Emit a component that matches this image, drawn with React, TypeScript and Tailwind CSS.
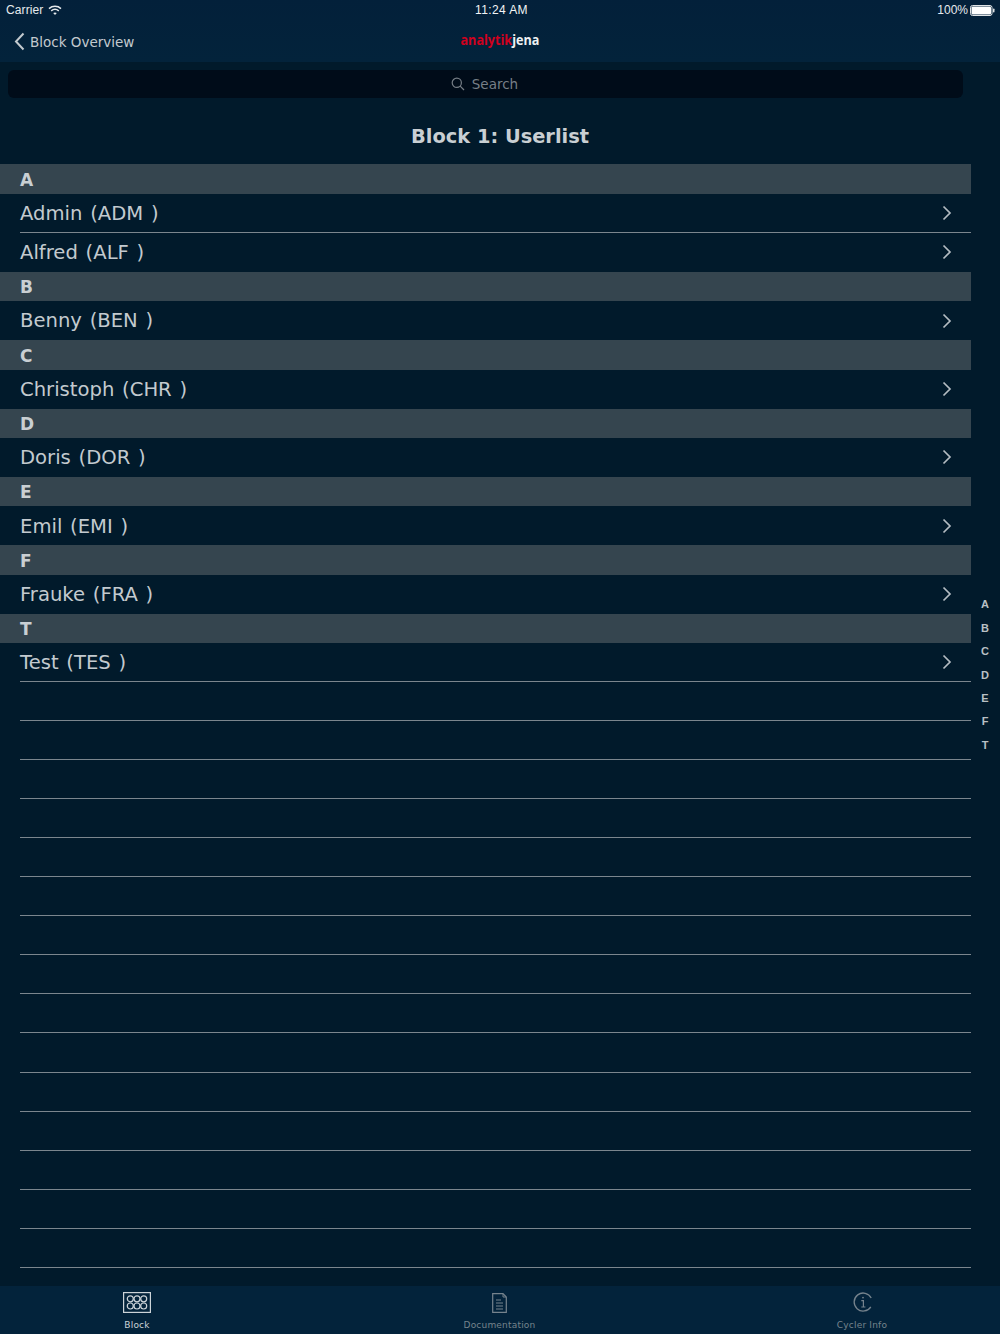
const sections: [string, string[]][] = [
  ["A", ["Admin (ADM )", "Alfred (ALF )"]],
  ["B", ["Benny (BEN )"]],
  ["C", ["Christoph (CHR )"]],
  ["D", ["Doris (DOR )"]],
  ["E", ["Emil (EMI )"]],
  ["F", ["Frauke (FRA )"]],
  ["T", ["Test (TES )"]],
];
const indexLetters = ["A", "B", "C", "D", "E", "F", "T"];
const emptyRows = Array.from({ length: 15 }, (_, i) => i);

function Chevron() {
  return (
    <svg width="10" height="16" viewBox="0 0 10 16" fill="none" className="shrink-0">
      <polyline points="1.5,1.5 8,8 1.5,14.5" stroke="#b4bcc2" strokeWidth="1.7" />
    </svg>
  );
}

function Wifi() {
  return (
    <svg width="14" height="11" viewBox="0 0 14 11" fill="none">
      <path d="M1 3.6 C4.4 .6 9.6 .6 13 3.6" stroke="#e6eaed" strokeWidth="1.5" />
      <path d="M3.2 5.9 C5.4 4.1 8.6 4.1 10.8 5.9" stroke="#e6eaed" strokeWidth="1.5" />
      <path d="M5.2 8 C6.3 7.2 7.7 7.2 8.8 8 L7 10 Z" fill="#e6eaed" />
    </svg>
  );
}

function Battery() {
  return (
    <svg width="25" height="11" viewBox="0 0 25 11">
      <rect x="0.5" y="0.5" width="21.5" height="10" rx="2" fill="none" stroke="#dfe3e6" />
      <rect x="1.5" y="1.5" width="19.5" height="8" rx="1" fill="#ffffff" />
      <rect x="23" y="3.5" width="1.5" height="4" rx="0.7" fill="#dfe3e6" />
    </svg>
  );
}

function BlockIcon() {
  const cx = [7.3, 14, 20.7];
  return (
    <svg width="28" height="21" viewBox="0 0 28 21" fill="none" stroke="#ccd3d8">
      <rect x="0.6" y="0.6" width="26.8" height="19.8" strokeWidth="1.2" />
      {cx.map((x) => (
        <g key={x}>
          <circle cx={x} cy="6.8" r="3" strokeWidth="1.2" />
          <circle cx={x} cy="14" r="3" strokeWidth="1.2" />
        </g>
      ))}
    </svg>
  );
}

function DocIcon() {
  return (
    <svg width="15" height="20" viewBox="0 0 15 20" fill="none" stroke="#76838d">
      <path d="M.7.7H11L14.3 4V19.3H.7Z" strokeWidth="1.2" />
      <path d="M11 1V4H14" strokeWidth="1" />
      <path d="M4 7H9M4 10H11M4 13H11M4 16H11" strokeWidth="1.2" />
    </svg>
  );
}

function InfoIcon() {
  return (
    <svg width="20" height="20" viewBox="0 0 20 20" fill="none" stroke="#76838d" className="translate-x-px -translate-y-px">
      <path d="M17.8 14.8A9 9 0 1 1 18.2 6" strokeWidth="1.3" />
      <path d="M8.3 8.6H10.4V15M8.3 15H12.4" strokeWidth="1.2" />
      <circle cx="10" cy="5.6" r="0.9" fill="#76838d" stroke="none" />
    </svg>
  );
}

function TabItem({ label, active, icon }: { label: string; active?: boolean; icon: React.ReactNode }) {
  return (
    <div className="flex w-[110px] flex-col items-center">
      <div className="flex h-[21px] items-center">{icon}</div>
      <div className={`mt-[6px] text-[9px] leading-3 tracking-[0.2px] ${active ? "text-[#ccd3d8]" : "text-[#76838d]"}`}>
        {label}
      </div>
    </div>
  );
}

export default function App() {
  return (
    <div className="relative flex h-[1334px] w-[1000px] flex-col overflow-hidden bg-[#011a2b] font-['DejaVu_Sans',sans-serif]">
      <header className="h-[62px] shrink-0 bg-gradient-to-b from-[#03203a] to-[#03233b]">
        <div className="flex h-5 items-center justify-between pl-[6px] pr-[5px] font-['Liberation_Sans',sans-serif] text-xs text-[#e6eaed]">
          <div className="flex flex-1 items-center gap-[5px] tracking-[0.1px]">
            <span>Carrier</span>
            <Wifi />
          </div>
          <div className="pl-[2px] tracking-[0.4px] text-[#f2f4f5]">11:24 AM</div>
          <div className="flex flex-1 items-center justify-end gap-[2px]">
            <span>100%</span>
            <Battery />
          </div>
        </div>
        <div className="flex h-[42px] items-center pl-[14px] pr-[15px]">
          <div className="flex flex-1 items-center gap-[5px] text-[13.5px] text-[#c3cacf]">
            <svg width="11" height="19" viewBox="0 0 11 19" fill="none">
              <polyline points="9.5,1.5 2,9.5 9.5,17.5" stroke="#c3cacf" strokeWidth="2" />
            </svg>
            <span className="translate-y-px">Block Overview</span>
          </div>
          <div className="origin-center scale-x-[0.84] font-['Open_Sans',sans-serif] text-[15px] font-bold leading-none whitespace-nowrap -mt-[3px]">
            <span className="text-[#d2001e]">analytik</span>
            <span className="text-[#eef1f3]">jena</span>
          </div>
          <div className="flex-1" />
        </div>
      </header>

      <main className="flex min-h-0 flex-1 flex-col">
        <div className="pl-2 pr-[37px] pt-2">
          <div className="flex h-7 items-center justify-center gap-[7px] rounded-md bg-[#000c19] pr-[2px] text-[13.5px] text-[#767f87]">
            <svg width="14" height="14" viewBox="0 0 14 14" fill="none" stroke="#767f87" strokeWidth="1.2">
              <circle cx="5.8" cy="5.8" r="4.6" />
              <path d="M9.2 9.2L13 13" />
            </svg>
            <span>Search</span>
          </div>
        </div>

        <h1 className="flex h-[66.4px] items-center justify-center pt-[10px] text-[19.4px] font-bold text-[#c9cfd3]">
          Block 1: Userlist
        </h1>

        <div className="w-[970.6px]">
          {sections.map(([letter, names]) => (
            <section key={letter}>
              <div className="flex h-[29.33px] items-center bg-[#35454f] pl-5 pt-[3px] text-[17px] font-bold text-[#c9cfd3]">
                {letter}
              </div>
              {names.map((name, i) => (
                <div key={name} className="pl-5">
                  <div
                    className={`flex h-[39.05px] items-center justify-between pr-[19px] text-[19.6px] text-[#c3cacf] [word-spacing:1.5px] ${
                      i < names.length - 1 || letter === "T" ? "border-b border-[#7b868e]" : ""
                    }`}
                  >
                    <span className="pt-px">{name}</span>
                    <Chevron />
                  </div>
                </div>
              ))}
            </section>
          ))}
          {emptyRows.map((r) => (
            <div key={r} className="pl-5">
              <div className="h-[39.05px] border-b border-[#7b868e]" />
            </div>
          ))}
        </div>
      </main>

      <nav className="flex h-12 shrink-0 items-start justify-between bg-[#03233b] pl-[82px] pr-[83px] pt-[6px]">
        <TabItem label="Block" active icon={<BlockIcon />} />
        <TabItem label="Documentation" icon={<DocIcon />} />
        <TabItem label="Cycler Info" icon={<InfoIcon />} />
      </nav>

      <div className="absolute left-[970px] top-[593px] flex w-[30px] flex-col items-center font-['Liberation_Sans',sans-serif] text-[11px] font-bold text-[#b9c0c5]">
        {indexLetters.map((l) => (
          <div key={l} className="flex h-[23.4px] items-center">
            {l}
          </div>
        ))}
      </div>
    </div>
  );
}
